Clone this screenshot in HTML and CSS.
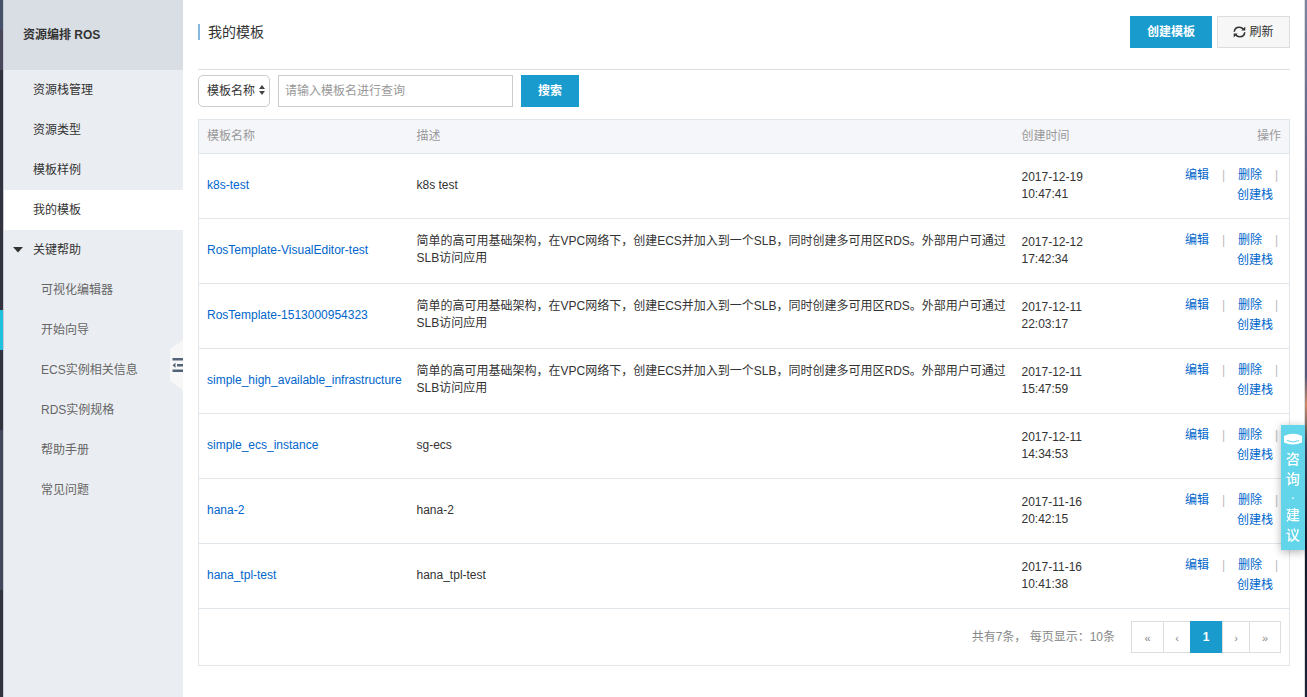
FILE: index.html
```html
<!DOCTYPE html>
<html lang="zh-CN">
<head>
    <meta charset="UTF-8">
    <meta name="viewport" content="width=device-width, initial-scale=1.0">
    <title>资源编排 ROS</title>
    <link rel="stylesheet" href="styles.css">
</head>
<body>
    <div class="product-rail">
        <div class="rail-top"></div>
        <div class="rail-head"></div>
        <div class="rail-dark"></div>
        <div class="rail-current"></div>
        <div class="rail-gap"></div>
        <div class="rail-group"></div>
    </div>

    <aside class="sidebar">
        <h1 class="sidebar-title">资源编排 ROS</h1>
        <nav class="menu">
            <a href="#">资源栈管理</a>
            <a href="#">资源类型</a>
            <a href="#">模板样例</a>
            <a href="#" class="active">我的模板</a>
            <button type="button" class="menu-group">
                <svg class="caret" width="10" height="6" viewBox="0 0 10 6"><path d="M0 0h10L5 5.5z" fill="#333"/></svg>
                关键帮助
            </button>
            <div class="submenu">
                <a href="#">可视化编辑器</a>
                <a href="#">开始向导</a>
                <a href="#">ECS实例相关信息</a>
                <a href="#">RDS实例规格</a>
                <a href="#">帮助手册</a>
                <a href="#">常见问题</a>
            </div>
        </nav>
        <button type="button" class="collapse" aria-label="收起菜单">
            <svg width="13" height="50" viewBox="0 0 13 50">
                <path d="M13 0v50L0 41V9z" fill="#f7f7f7"/>
                <path d="M2.500 18H13v2.500H2.500zM7 24h6v2.500H7zM2.500 29.500H13V32H2.500zM2.500 25.200L5.500 22.700v5z" fill="#546478"/>
            </svg>
        </button>
    </aside>

    <main class="content">
        <header class="page-header">
            <h2>我的模板</h2>
            <div class="header-buttons">
                <button type="button" class="btn btn-primary">创建模板</button>
                <button type="button" class="btn btn-default">
                    <svg width="13" height="12" viewBox="0 0 13 12" fill="none" stroke="#333" stroke-width="1.600">
                        <path d="M1.300 5.700C1.500 3 3.600 1.200 6.300 1.200c1.700 0 3.100.700 4.100 2M11.700 6.300c-.2 2.700-2.300 4.500-5 4.500-1.700 0-3.100-.7-4.100-2"/>
                        <path d="M12.300.6v4H8.300zM.7 11.400v-4h4z" fill="#333" stroke="none"/>
                    </svg>
                    刷新
                </button>
            </div>
        </header>

        <form class="search">
            <div class="select-box">
                <select aria-label="查询字段">
                    <option>模板名称</option>
                </select>
                <svg width="6" height="10" viewBox="0 0 6 10"><path d="M3 0l3 4H0zM3 10L0 6h6z" fill="#444"/></svg>
            </div>
            <input type="text" aria-label="模板名" placeholder="请输入模板名进行查询">
            <button type="button" class="btn btn-primary btn-search">搜索</button>
        </form>

        <table class="templates">
            <colgroup>
                <col class="col-name">
                <col>
                <col class="col-time">
                <col class="col-ops">
            </colgroup>
            <thead>
                <tr>
                    <th>模板名称</th>
                    <th>描述</th>
                    <th>创建时间</th>
                    <th class="ops-head">操作</th>
                </tr>
            </thead>
            <tbody>
                <tr>
                    <td class="name"><a href="#">k8s-test</a></td>
                    <td class="desc">k8s test</td>
                    <td>2017-12-19<br>10:47:41</td>
                    <td class="ops"><a href="#">编辑</a><i>|</i><a href="#">删除</a><i>|</i><br><a href="#">创建栈</a></td>
                </tr>
                <tr>
                    <td class="name"><a href="#">RosTemplate-VisualEditor-test</a></td>
                    <td class="desc">简单的高可用基础架构，在VPC网络下，创建ECS并加入到一个SLB，同时创建多可用区RDS。外部用户可通过SLB访问应用</td>
                    <td>2017-12-12<br>17:42:34</td>
                    <td class="ops"><a href="#">编辑</a><i>|</i><a href="#">删除</a><i>|</i><br><a href="#">创建栈</a></td>
                </tr>
                <tr>
                    <td class="name"><a href="#">RosTemplate-1513000954323</a></td>
                    <td class="desc">简单的高可用基础架构，在VPC网络下，创建ECS并加入到一个SLB，同时创建多可用区RDS。外部用户可通过SLB访问应用</td>
                    <td>2017-12-11<br>22:03:17</td>
                    <td class="ops"><a href="#">编辑</a><i>|</i><a href="#">删除</a><i>|</i><br><a href="#">创建栈</a></td>
                </tr>
                <tr>
                    <td class="name"><a href="#">simple_high_available_infrastructure</a></td>
                    <td class="desc">简单的高可用基础架构，在VPC网络下，创建ECS并加入到一个SLB，同时创建多可用区RDS。外部用户可通过SLB访问应用</td>
                    <td>2017-12-11<br>15:47:59</td>
                    <td class="ops"><a href="#">编辑</a><i>|</i><a href="#">删除</a><i>|</i><br><a href="#">创建栈</a></td>
                </tr>
                <tr>
                    <td class="name"><a href="#">simple_ecs_instance</a></td>
                    <td class="desc">sg-ecs</td>
                    <td>2017-12-11<br>14:34:53</td>
                    <td class="ops"><a href="#">编辑</a><i>|</i><a href="#">删除</a><i>|</i><br><a href="#">创建栈</a></td>
                </tr>
                <tr>
                    <td class="name"><a href="#">hana-2</a></td>
                    <td class="desc">hana-2</td>
                    <td>2017-11-16<br>20:42:15</td>
                    <td class="ops"><a href="#">编辑</a><i>|</i><a href="#">删除</a><i>|</i><br><a href="#">创建栈</a></td>
                </tr>
                <tr>
                    <td class="name"><a href="#">hana_tpl-test</a></td>
                    <td class="desc">hana_tpl-test</td>
                    <td>2017-11-16<br>10:41:38</td>
                    <td class="ops"><a href="#">编辑</a><i>|</i><a href="#">删除</a><i>|</i><br><a href="#">创建栈</a></td>
                </tr>
            </tbody>
        </table>

        <div class="table-footer">
            <span class="total">共有7条， 每页显示：10条</span>
            <nav class="pagination" aria-label="分页">
                <a href="#" class="wide">«</a>
                <a href="#">‹</a>
                <a href="#" class="wide current">1</a>
                <a href="#">›</a>
                <a href="#" class="wide">»</a>
            </nav>
        </div>
    </main>

    <div class="desktop-edge"></div>

    <a href="#" class="feedback">
        <svg width="18" height="12" viewBox="0 0 18 12">
            <path d="M0 3Q9-1.500 18 3V9.500Q9 13.500 0 9.500z" fill="#fff"/>
            <path d="M3 7.500q6 3 12 0" fill="none" stroke="#63d5ea" stroke-width="1"/>
        </svg>
        <span>咨</span>
        <span>询</span>
        <span class="dot">·</span>
        <span>建</span>
        <span>议</span>
    </a>
</body>
</html>
```
FILE: styles.css
```css
* {
    box-sizing: border-box;
}

body {
    margin: 0;
    min-height: 100vh;
    display: flex;
    background-color: #fff;
    color: #333;
    font-family: "Liberation Sans", "Noto Sans CJK SC", sans-serif;
    font-size: 12px;
    line-height: 17px;
}

a {
    color: #06c;
    text-decoration: none;
}

button,
input,
select {
    font: inherit;
    color: inherit;
}

/* Dark product bar on the far left */
.product-rail {
    flex: none;
    display: flex;
    flex-direction: column;
    width: 4px;
    background-color: #33333f;
    border-right: 1px solid #c5c9d3;
}

.rail-top {
    height: 30px;
    background-color: #475069;
}

.rail-head {
    height: 40px;
    background-color: #474759;
}

.rail-dark {
    height: 240px;
}

.rail-current {
    height: 40px;
    background-color: #1fc1de;
}

.rail-gap {
    height: 80px;
}

.rail-group {
    height: 160px;
    background-color: #42485b;
}

/* Sidebar */
.sidebar {
    position: relative;
    flex: none;
    width: 179px;
    background-color: #eaedf1;
}

.sidebar-title {
    margin: 0;
    padding-left: 19px;
    background-color: #d9dee4;
    font-size: 12px;
    line-height: 70px;
}

.menu a,
.menu-group {
    display: block;
    width: 100%;
    height: 40px;
    padding: 0 0 0 29px;
    color: #333;
    line-height: 40px;
    text-align: left;
}

.menu a.active {
    background-color: #fff;
}

.menu-group {
    display: flex;
    align-items: center;
    gap: 10px;
    padding-left: 9px;
    border: 0;
    background: none;
}

.menu .submenu a {
    padding-left: 37px;
    color: #666;
}

.collapse {
    position: absolute;
    top: 340px;
    right: 0;
    padding: 0;
    border: 0;
    background: none;
}

.collapse svg {
    display: block;
}

/* Main area */
.content {
    flex: 1;
    min-width: 0;
    padding: 0 14px 0 15px;
}

.page-header {
    display: flex;
    align-items: flex-start;
    justify-content: space-between;
    height: 70px;
    padding-top: 16px;
    border-bottom: 1px solid #ddd;
}

.page-header h2 {
    margin: 8px 0 0;
    padding-left: 8px;
    border-left: 2px solid #88b7e0;
    font-size: 14px;
    font-weight: normal;
    line-height: 16px;
}

.header-buttons {
    display: flex;
    gap: 5px;
}

.btn {
    display: flex;
    align-items: center;
    justify-content: center;
    gap: 3px;
    height: 32px;
    padding: 0 16px;
    border: 0;
}

.btn-primary {
    width: 82px;
    background-color: #199bcd;
    color: #fff;
    font-weight: bold;
}

.btn-default {
    width: 73px;
    padding: 0;
    border: 1px solid #ddd;
    background-color: #f7f7f7;
}

.search {
    display: flex;
    gap: 8px;
    padding: 5px 0 12px;
}

.select-box {
    position: relative;
    width: 72px;
}

.select-box select {
    appearance: none;
    width: 100%;
    height: 32px;
    padding: 0 8px;
    border: 1px solid #ccc;
    border-radius: 5px;
    background-color: #fff;
}

.select-box svg {
    position: absolute;
    top: 10px;
    right: 5px;
    pointer-events: none;
}

.search input {
    width: 235px;
    height: 32px;
    padding: 0 6px;
    border: 1px solid #ccc;
}

.search input::placeholder {
    color: #999;
}

.search .btn-search {
    width: 58px;
}

/* Template list */
.templates {
    width: 100%;
    table-layout: fixed;
    border-collapse: collapse;
    border: 1px solid #e1e6eb;
}

.col-name {
    width: 210px;
}

.col-time {
    width: 109px;
}

.col-ops {
    width: 167px;
}

.templates th {
    height: 34px;
    padding: 0 8px;
    background-color: #f5f6fa;
    color: #999;
    font-weight: normal;
    text-align: left;
}

.templates td {
    height: 65px;
    padding: 0 8px;
    border-top: 1px solid #e1e6eb;
}

.templates .name {
    padding-bottom: 2px;
}

.templates .desc {
    padding: 0 4px 2px 8px;
}

.templates .ops-head {
    text-align: right;
}

.templates .ops {
    padding: 0 16px 2px 8px;
    line-height: 20px;
    text-align: right;
    white-space: nowrap;
}

.ops i {
    display: inline-block;
    width: 29px;
    color: #bbb;
    font-style: normal;
    text-align: center;
}

/* the last divider hangs into the cell padding */
.ops i:nth-of-type(2) {
    margin-right: -18px;
}

.table-footer {
    display: flex;
    align-items: center;
    justify-content: flex-end;
    gap: 16px;
    height: 57px;
    padding: 0 8px;
    border: 1px solid #e1e6eb;
    border-top: 0;
    color: #888;
}

.pagination {
    display: flex;
    border: 1px solid #ddd;
}

.pagination a {
    width: 27px;
    height: 30px;
    border-left: 1px solid #ddd;
    color: #888;
    font-size: 11px;
    line-height: 32px;
    text-align: center;
}

.pagination a:first-child {
    border-left: 0;
}

.pagination .wide {
    width: 31px;
}

.pagination .current {
    width: 32px;
    height: 32px;
    margin: -1px 0;
    border: 0;
    background-color: #199bcd;
    color: #fff;
    font-size: 12px;
    font-weight: bold;
}

/* Sliver of desktop behind the window */
.desktop-edge {
    flex: none;
    width: 3px;
    border-left: 1px solid #ddd;
    background: linear-gradient(#7c84a3, #55597d 30%, #55597d 54%, #c98a68 58%, #3b4a63 64%, #10182a 78%, #1b2338);
}

.feedback {
    position: fixed;
    top: 425px;
    right: 2px;
    display: flex;
    flex-direction: column;
    align-items: center;
    width: 24px;
    padding: 8px 0 5px;
    background-color: #63d5ea;
    box-shadow: 0 2px 8px rgba(0, 0, 0, 0.3);
    color: #fff;
    font-size: 14px;
    font-weight: 500;
    line-height: 20px;
}

.feedback svg {
    margin-bottom: 4px;
}

.feedback .dot {
    line-height: 16px;
}
```
